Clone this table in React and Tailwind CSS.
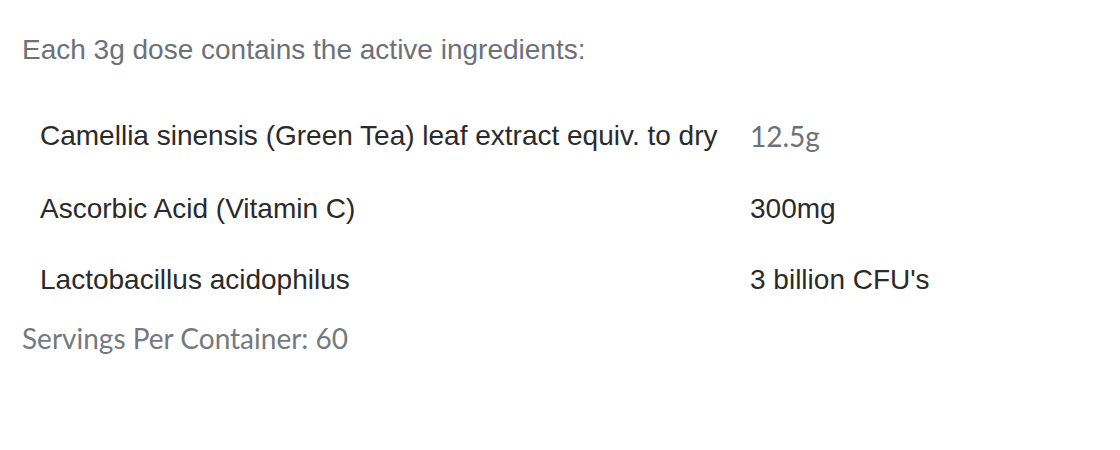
import React from "react";

const rows = [
  { name: "Camellia sinensis (Green Tea) leaf extract equiv. to dry", amount: "12.5g", lato: true, pad: "pt-[22px] pb-[23px]" },
  { name: "Ascorbic Acid (Vitamin C)", amount: "300mg", pad: "pt-[18px] pb-[21px]" },
  { name: "Lactobacillus acidophilus", amount: "3 billion CFU's", pad: "py-[18px]" },
];

export default function App() {
  return (
    <div className="w-[1120px] h-[450px] bg-white px-[22px] pt-[34px]">
      <p className="font-['Liberation_Sans',Arial,sans-serif] text-[28px] leading-[32px] text-[#6c7179]">
        Each 3g dose contains the active ingredients:
      </p>
      <div className="mt-[32px] grid grid-cols-[728px_1fr] text-[28px] leading-[32px] text-[#2a2a2a] font-['Liberation_Sans',Arial,sans-serif]">
        {rows.map((r) => (
          <React.Fragment key={r.name}>
            <div className={"pl-[18px] whitespace-nowrap " + r.pad}>{r.name}</div>
            <div
              className={
                r.lato
                  ? "font-['Lato',sans-serif] text-[#6c7179] " + r.pad
                  : r.pad
              }
            >
              {r.amount}
            </div>
          </React.Fragment>
        ))}
      </div>
      <p className="mt-[8px] font-['Lato',sans-serif] text-[28px] leading-[32px] text-[#747980]">
        Servings Per Container: 60
      </p>
    </div>
  );
}
